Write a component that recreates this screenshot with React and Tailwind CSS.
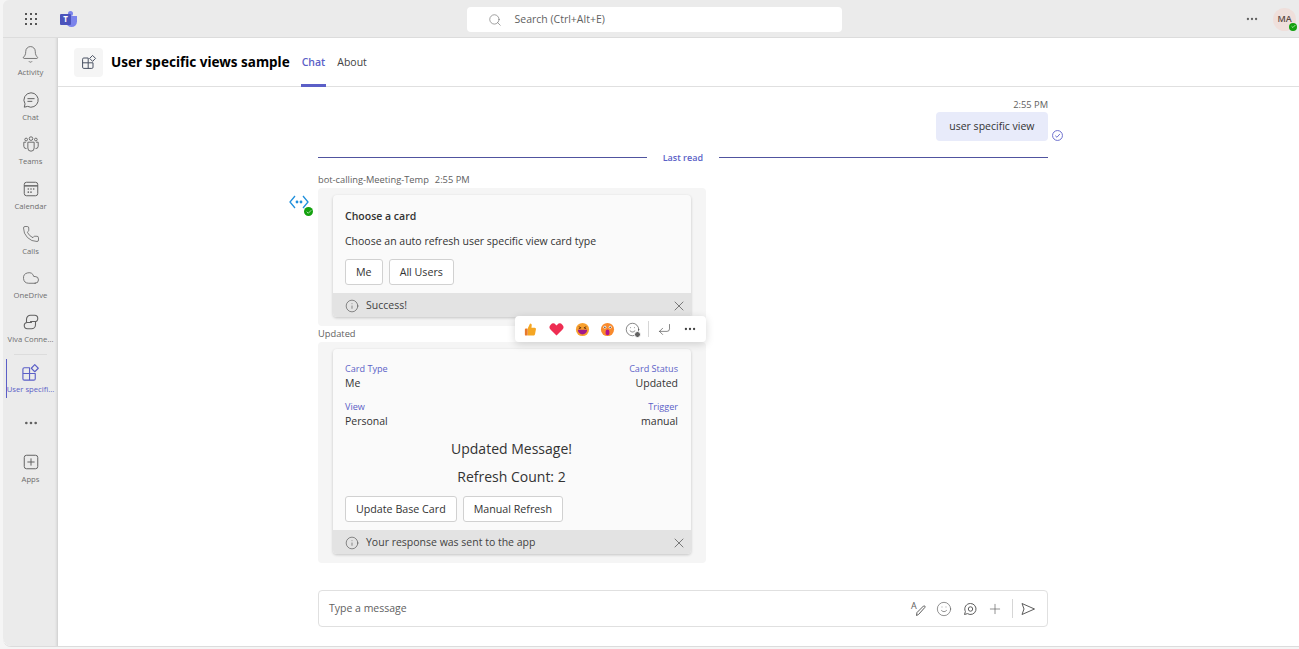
import React from 'react';
import { Bell, Cloud, Phone, Plus, X, Info, MoreHorizontal, Search, CornerDownLeft, Smile, Check } from 'lucide-react';

const font = { fontFamily: '"Open Sans", "Noto Sans", sans-serif' };

const AppIcon = ({ className, size = 18 }) => (
  <svg viewBox="0 0 20 20" width={size} height={size} fill="none" stroke="currentColor" strokeWidth="1.2" className={className}>
    <path d="M9 5H3.5A1.5 1.5 0 0 0 2 6.5v10A1.5 1.5 0 0 0 3.5 18h10a1.5 1.5 0 0 0 1.5-1.5V11H9V5ZM9 11H2M9 11v7" strokeLinejoin="round" />
    <path d="M14.5 1.8 18.2 5.5 14.5 9.2 10.8 5.5Z" strokeLinejoin="round" />
  </svg>
);

const ChatGlyph = ({ size = 18 }) => (
  <svg viewBox="0 0 20 20" width={size} height={size} fill="none" stroke="currentColor" strokeWidth="1.1">
    <path d="M10 2a8 8 0 1 1-3.7 15.1L2.5 18l.9-3.7A8 8 0 0 1 10 2Z" strokeLinejoin="round" />
    <path d="M6.5 8.5h7M6.5 11.5h4.5" strokeLinecap="round" />
  </svg>
);

const TeamsGlyph = ({ size = 18 }) => (
  <svg viewBox="0 0 20 20" width={size} height={size} fill="none" stroke="currentColor" strokeWidth="1">
    <circle cx="10" cy="4" r="2" />
    <circle cx="4.6" cy="5" r="1.5" />
    <circle cx="15.4" cy="5" r="1.5" />
    <path d="M6.5 8h7v6.5a3.5 3.5 0 0 1-7 0V8Z" />
    <path d="M4.5 8H2v4.5a2.8 2.8 0 0 0 3 2.6M15.5 8H18v4.5a2.8 2.8 0 0 1-3 2.6" />
  </svg>
);

const CalendarGlyph = ({ size = 18 }) => (
  <svg viewBox="0 0 20 20" width={size} height={size} fill="none" stroke="currentColor" strokeWidth="1.1">
    <rect x="2.5" y="2.5" width="15" height="15" rx="2.5" />
    <path d="M2.5 6.5h15" strokeWidth="1.6" />
    <g fill="currentColor" stroke="none">
      <circle cx="7" cy="10" r=".9" /><circle cx="10" cy="10" r=".9" /><circle cx="13" cy="10" r=".9" />
      <circle cx="7" cy="13.5" r=".9" /><circle cx="10" cy="13.5" r=".9" />
    </g>
  </svg>
);

const VivaGlyph = ({ size = 18 }) => (
  <svg viewBox="0 0 20 20" width={size} height={size} fill="none" stroke="currentColor" strokeWidth="1.2">
    <path d="M5 10.5V7a4.5 4.5 0 0 1 4.5-4.5H14a3.5 3.5 0 0 1 0 7H9" />
    <path d="M15 9.5V13a4.5 4.5 0 0 1-4.5 4.5H6a3.5 3.5 0 0 1 0-7h5" />
  </svg>
);

const AppsGlyph = ({ size = 18 }) => (
  <svg viewBox="0 0 20 20" width={size} height={size} fill="none" stroke="currentColor" strokeWidth="1.1">
    <rect x="2.5" y="2.5" width="15" height="15" rx="2.5" />
    <path d="M10 6v8M6 10h8" />
  </svg>
);

const railItems = [
  { label: 'Activity', icon: <Bell size={19} strokeWidth={1.05} />, h: 'h-[45px]' },
  { label: 'Chat', icon: <ChatGlyph />, h: 'h-[45px]' },
  { label: 'Teams', icon: <TeamsGlyph />, h: 'h-[44px]' },
  { label: 'Calendar', icon: <CalendarGlyph />, h: 'h-[45px]' },
  { label: 'Calls', icon: <Phone size={18} strokeWidth={1.05} />, h: 'h-[45px]' },
  { label: 'OneDrive', icon: <Cloud size={18} strokeWidth={1.1} />, h: 'h-[43px]' },
  { label: 'Viva Conne...', icon: <VivaGlyph />, h: 'h-[45px]' },
];

const RailItem = ({ label, icon, h }) => (
  <div className={`${h} flex flex-col items-center justify-center text-[#616161]`}>
    {icon}
    <span className="mt-[3px] text-[7.7px] leading-[11px] text-[#6e6e6e] whitespace-nowrap">{label}</span>
  </div>
);

const Rail = () => (
  <nav className="w-[55px] shrink-0 rounded-bl-lg bg-[#ebebeb] pt-px shadow-[inset_-4px_0_3px_-3px_rgba(0,0,0,0.14)]">
    {railItems.map((item) => (
      <RailItem key={item.label} {...item} />
    ))}
    <div className="mx-[11px] mt-[3px] h-px bg-[#dcdcdc]" />
    <div className="relative mt-[4px] h-[39px] flex flex-col items-center justify-center text-[#5b5fc7]">
      <div className="absolute left-[3px] top-0 bottom-0 w-px bg-[#5b5fc7]" />
      <AppIcon size={19} />
      <span className="mt-[2px] text-[7.7px] leading-[11px] whitespace-nowrap">User specifi...</span>
    </div>
    <div className="mt-[17px] flex justify-center text-[#616161]">
      <MoreHorizontal size={16} strokeWidth={2} />
    </div>
    <div className="mt-[15px]">
      <RailItem label="Apps" icon={<AppsGlyph />} h="h-[45px]" />
    </div>
  </nav>
);

const Reactions = () => (
  <div className="absolute left-[197px] top-[143px] z-20 flex h-[26px] w-[191px] items-center rounded bg-white pl-[3px] shadow-[0_2px_8px_rgba(0,0,0,0.16)]">
    <svg viewBox="0 0 16 16" width="15" height="15" className="ml-[5px]">
      <path d="M5 7 7.5 1.5c1.3 0 2 .9 1.8 2.2L9 6h3.4c1 0 1.6.8 1.4 1.7l-1 5.3c-.2.9-.9 1.5-1.8 1.5H5Z" fill="#f5a623" />
      <rect x="2" y="7" width="3" height="7.5" rx="1" fill="#e8792b" />
    </svg>
    <svg viewBox="0 0 16 16" width="15" height="15" className="ml-[11px]">
      <path d="M8 14.5 1.8 8.2A3.8 3.8 0 0 1 7.2 2.8L8 3.6l.8-.8a3.8 3.8 0 0 1 5.4 5.4Z" fill="#ee2d52" />
    </svg>
    <svg viewBox="0 0 16 16" width="15" height="15" className="ml-[11px]">
      <circle cx="8" cy="8" r="7" fill="#f8a02e" />
      <path d="M3 8.2h10a5 5 0 0 1-10 0Z" fill="#a11a8c" />
      <path d="M4 5 6.5 6.2 4 7.2M12 5 9.5 6.2 12 7.2" stroke="#5b2a10" strokeWidth=".9" fill="none" />
    </svg>
    <svg viewBox="0 0 16 16" width="15" height="15" className="ml-[10px]">
      <circle cx="8" cy="8" r="7" fill="#f98a2c" />
      <rect x="6" y="8" width="4" height="6" rx="2" fill="#b3128c" />
      <circle cx="5.2" cy="5.5" r="1.5" fill="#fff" /><circle cx="10.8" cy="5.5" r="1.5" fill="#fff" />
      <circle cx="5.2" cy="5.5" r=".8" fill="#3a2a20" /><circle cx="10.8" cy="5.5" r=".8" fill="#3a2a20" />
    </svg>
    <div className="relative ml-[10px] text-[#424242]">
      <Smile size={15} strokeWidth={1} />
      <div className="absolute -right-[1px] -bottom-[1px] h-[7px] w-[7px] rounded-full border border-white bg-[#616161]" />
    </div>
    <div className="ml-[8px] h-[16px] w-px bg-[#d6d6d6]" />
    <CornerDownLeft size={15} strokeWidth={1} className="ml-[8px] text-[#424242]" />
    <MoreHorizontal size={14} strokeWidth={2} className="ml-[11px] text-[#424242]" />
  </div>
);

const Banner = ({ children }) => (
  <div className="flex h-[24px] items-center justify-between rounded-b bg-[#e3e3e3] pl-[12px] pr-[4px] pt-px text-[10.5px] text-[#424242]">
    <div className="flex items-center gap-[7px]">
      <Info size={14} strokeWidth={1} />
      <span>{children}</span>
    </div>
    <X size={16} strokeWidth={1} />
  </div>
);

const CardButton = ({ children }) => (
  <div className="flex h-[26px] items-center rounded-[3px] border border-[#d1d1d1] bg-white px-[10px] pt-px text-[10.7px] font-medium text-[#333]">
    {children}
  </div>
);

const Fact = ({ label, value, right }) => (
  <div className={right ? 'text-right' : ''}>
    <div className="text-[9.1px] leading-[13px] text-[#5b5fc7]">{label}</div>
    <div className="mt-[1px] text-[10.5px] leading-[14px] text-[#333]">{value}</div>
  </div>
);

const CardShell = ({ children, banner }) => (
  <div className="rounded bg-[#fafafa] shadow-[0_1px_3px_rgba(0,0,0,0.2)]">
    {children}
    <Banner>{banner}</Banner>
  </div>
);

const Thread = () => (
  <div className="relative w-[730px]">
    <div className="pt-[11px] text-right text-[9.3px] leading-[13px] text-[#616161]">2:55 PM</div>
    <div className="relative mt-[1px] flex justify-end">
      <div className="flex h-[29px] items-center rounded bg-[#e8ebfa] px-[13.5px] text-[10.5px] text-[#333]">user specific view</div>
      <svg viewBox="0 0 10 10" width="11" height="11" fill="none" stroke="#5b5fc7" strokeWidth=".8" className="absolute -right-[15px] top-[18px]">
        <circle cx="5" cy="5" r="4.5" />
        <path d="M3 5.2 4.5 6.6 7.2 3.6" />
      </svg>
    </div>

    <div className="mt-[9px] flex items-center">
      <div className="h-px flex-1 bg-[#50549f]" />
      <span className="px-[16px] text-[9px] font-semibold leading-[15px] text-[#5b5fc7]">Last read</span>
      <div className="h-px w-[329px] bg-[#50549f]" />
    </div>

    <div className="relative mt-[8px] w-[388px]">
      <div className="text-[9.3px] leading-[14px] text-[#616161]">
        bot-calling-Meeting-Temp<span className="ml-[6px]">2:55 PM</span>
      </div>

      <div className="absolute -left-[29px] top-[22px] h-[21px] w-[24px]">
        <svg viewBox="0 0 20 14" width="20" height="14">
          <path d="M6 1 1 7l5 6M14 1l5 6-5 6" fill="none" stroke="#1f8fdc" strokeWidth="1.3" />
          <circle cx="8" cy="7" r="1.4" fill="#1f8fdc" /><circle cx="12" cy="7" r="1.4" fill="#1f8fdc" />
        </svg>
        <div className="absolute right-0 bottom-0 flex h-[9px] w-[9px] items-center justify-center rounded-full bg-[#13a10e] text-white">
          <Check size={6} strokeWidth={2.5} />
        </div>
      </div>

      <div className="mt-[1px] rounded bg-[#f5f5f5] px-[15px] pt-[7px] pb-[9px]">
        <CardShell banner="Success!">
          <div className="pl-[12px] pr-[13px] pt-[14px] pb-[8px] text-[10.5px] text-[#333]">
            <div className="font-semibold leading-[14px]">Choose a card</div>
            <div className="mt-[11px] leading-[14px]">Choose an auto refresh user specific view card type</div>
            <div className="mt-[11px] flex gap-[6px]">
              <CardButton>Me</CardButton>
              <CardButton>All Users</CardButton>
            </div>
          </div>
        </CardShell>
      </div>

      <div className="text-[9.3px] leading-[16px] text-[#616161]">Updated</div>

      <div className="rounded bg-[#f5f5f5] px-[15px] pt-[7px] pb-[9px]">
        <CardShell banner="Your response was sent to the app">
          <div className="pl-[12px] pr-[13px] pt-[13px] pb-[8px]">
            <div className="flex justify-between">
              <Fact label="Card Type" value="Me" />
              <Fact label="Card Status" value="Updated" right />
            </div>
            <div className="mt-[10px] flex justify-between">
              <Fact label="View" value="Personal" />
              <Fact label="Trigger" value="manual" right />
            </div>
            <div className="mt-[11px] text-center text-[14px] leading-[19px] text-[#333]">Updated Message!</div>
            <div className="mt-[9px] text-center text-[14px] leading-[19px] text-[#333]">Refresh Count: 2</div>
            <div className="mt-[10px] flex gap-[6px]">
              <CardButton>Update Base Card</CardButton>
              <CardButton>Manual Refresh</CardButton>
            </div>
          </div>
        </CardShell>
      </div>

      <Reactions />
    </div>

    <div className="mt-[27px] flex h-[37px] items-center justify-between rounded border border-[#e0e0e0] pl-[10px] pr-[11px] text-[#616161]">
      <span className="text-[10.5px] text-[#616161]">Type a message</span>
      <div className="flex items-center text-[#5c5c5c]">
        <div className="relative h-[16px] w-[16px]">
          <span className="absolute left-0 -top-[1px] text-[9px] leading-[12px]">A</span>
          <svg viewBox="0 0 16 16" width="16" height="16" fill="none" stroke="currentColor" strokeWidth="1" className="absolute inset-0">
            <path d="M5.5 14.5 6 11.5 12.5 5c.8-.8 2.2.6 1.4 1.4L7.5 13.5Z" strokeLinejoin="round" />
          </svg>
        </div>
        <Smile size={16} strokeWidth={1} className="ml-[9px]" />
        <svg viewBox="0 0 16 16" width="16" height="16" fill="none" stroke="currentColor" strokeWidth="1" className="ml-[10px]">
          <path d="M8.5 2.5a5.5 5.5 0 1 1-3 10.1l-3 .9.9-3a5.5 5.5 0 0 1 5.1-8Z" strokeLinejoin="round" />
          <circle cx="8.5" cy="8" r="2.2" />
        </svg>
        <Plus size={16} strokeWidth={1} className="ml-[9px]" />
        <div className="ml-[9px] h-[19px] w-px bg-[#d6d6d6]" />
        <svg viewBox="0 0 16 16" width="16" height="16" fill="none" stroke="currentColor" strokeWidth="1" className="ml-[7px]">
          <path d="M2 2.5 14.5 8 2 13.5 4 8 2 2.5Z" strokeLinejoin="round" />
        </svg>
      </div>
    </div>
  </div>
);

export default function App() {
  return (
    <div className="flex h-[649px] w-[1299px] flex-col overflow-hidden bg-[#f5f5f5] text-[#242424]" style={font}>
      <header className="ml-[3px] flex h-[38px] shrink-0 items-center rounded-tl-md border-b border-[#dcdcdc] bg-[#ebebeb] pt-px">
        <div className="ml-[22px] grid grid-cols-3 gap-[3px]">
          {Array.from({ length: 9 }).map((_, i) => (
            <span key={i} className="h-[2px] w-[2px] bg-[#555]" />
          ))}
        </div>
        <div className="relative ml-[23px] flex h-[16px] w-[17px] items-center">
          <div className="z-10 flex h-[11px] w-[11px] items-center justify-center rounded-[1px] bg-[#4b53bc] text-[8px] font-bold text-white">T</div>
          <div className="absolute right-0 bottom-0 h-[11px] w-[11px] rounded-b-md bg-[#7b83eb]" />
          <div className="absolute right-[4px] top-0 h-[5px] w-[5px] rounded-full bg-[#7b83eb]" />
        </div>
        <div className="ml-[390px] flex h-[25px] w-[375px] items-center rounded bg-white pl-[21px] pt-px text-[10.5px] text-[#616161]">
          <Search size={14} strokeWidth={1} />
          <span className="ml-[12.5px]">Search (Ctrl+Alt+E)</span>
        </div>
        <MoreHorizontal size={14} strokeWidth={2} className="ml-[403px] text-[#616161]" />
        <div className="relative ml-[14px] flex h-[23px] w-[23px] items-center justify-center rounded-full bg-[#efdfdb] text-[9px] font-semibold text-[#5c4a45]">
          MA
          <div className="absolute -right-[1px] bottom-0 flex h-[8px] w-[8px] items-center justify-center rounded-full bg-[#13a10e] text-white">
            <Check size={5} strokeWidth={3} />
          </div>
        </div>
      </header>

      <div className="ml-[3px] flex h-[609px] min-h-0 rounded-bl-lg border-b border-[#dcdcdc] bg-white">
        <Rail />
        <main className="flex min-w-0 flex-1 flex-col">
          <div className="flex h-[49px] shrink-0 items-stretch border-b border-[#e0e0e0] pl-[16px]">
            <div className="flex items-center">
              <div className="flex h-[29px] w-[29px] items-center justify-center rounded bg-[#f5f5f5] text-[#424a5c]">
                <AppIcon size={16} />
              </div>
              <h1 className="ml-[8px] pt-px text-[13.5px] font-bold text-black" style={{ fontFamily: '"Noto Sans", sans-serif' }}>User specific views sample</h1>
            </div>
            <div className="relative ml-[11px] flex items-center px-[1px] pt-px text-[10.5px] font-semibold text-[#5b5fc7]">
              Chat
              <div className="absolute inset-x-0 bottom-[-1px] h-[3px] bg-[#5b5fc7]" />
            </div>
            <div className="ml-[11px] flex items-center pt-px text-[10.5px] text-[#424242]">About</div>
          </div>
          <div className="pl-[260px]">
            <Thread />
          </div>
        </main>
      </div>
    </div>
  );
}
